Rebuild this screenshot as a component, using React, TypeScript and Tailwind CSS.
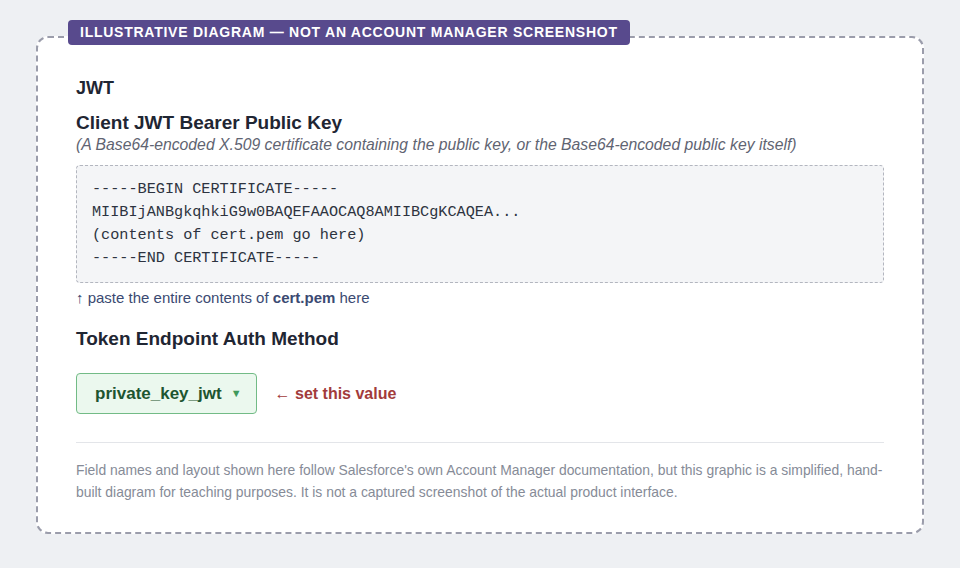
import React from "react";

const certLines = [
  "-----BEGIN CERTIFICATE-----",
  "MIIBIjANBgkqhkiG9w0BAQEFAAOCAQ8AMIIBCgKCAQEA...",
  "(contents of cert.pem go here)",
  "-----END CERTIFICATE-----",
];

export default function App() {
  return (
    <div
      className="min-h-[568px] w-full bg-[#eef0f3] px-9 pt-9 pb-9"
      style={{ fontFamily: '"Liberation Sans", Arial, sans-serif' }}
    >
      <div className="relative rounded-[12px] border-2 border-dashed border-[#9b9dab] bg-white px-[38px] pt-[39px] pb-[29px]">
        {/* Badge over the top border */}
        <div className="absolute left-[30px] top-[-18px] rounded-[4px] bg-[#584a8d] px-[12px] py-[4px] text-[14px] font-bold uppercase leading-[17px] tracking-[0.75px] text-white">
          Illustrative diagram — not an Account Manager screenshot
        </div>

        <h2 className="text-[18px] font-bold leading-[22px] text-[#1f2633]">JWT</h2>

        <h3 className="mt-[12px] text-[19px] font-bold leading-[24px] text-[#1f2633]">
          Client JWT Bearer Public Key
        </h3>
        <p className="text-[15.75px] italic leading-[20px] text-[#5f6472]">
          (A Base64-encoded X.509 certificate containing the public key, or the Base64-encoded public key itself)
        </p>

        <div
          className="mt-[10px] rounded-[4px] border border-dashed border-[#b3b6bf] bg-[#f4f5f7] px-[15px] py-[12px] text-[15.2px] leading-[23px] text-[#2d3340]"
          style={{ fontFamily: '"Liberation Mono", "Courier New", monospace' }}
        >
          {certLines.map((l) => (
            <div key={l}>{l}</div>
          ))}
        </div>

        <p className="mt-[5px] text-[15px] leading-[20px] text-[#3b4a72]">
          ↑ paste the entire contents of <span className="font-bold">cert.pem</span> here
        </p>

        <h3 className="mt-[19px] text-[19px] font-bold leading-[24px] text-[#1f2633]">
          Token Endpoint Auth Method
        </h3>

        <div className="mt-[22px] flex items-center gap-[18px]">
          <div className="flex h-[41px] items-center gap-[9px] rounded-[4px] border border-[#72bb86] bg-[#ebf8ee] pl-[18px] pr-[14px]">
            <span className="text-[17px] font-bold text-[#1d5530]">private_key_jwt</span>
            <span className="text-[11px] text-[#3f9a5c]">▼</span>
          </div>
          <span className="text-[16px] font-bold text-[#a23b3b]">
            <span className="font-normal">←</span> set this value
          </span>
        </div>

        <div className="mt-[28px] border-t border-[#e3e5e9]" />

        <p className="mt-[16px] text-[13.9px] leading-[22px] text-[#868b97]">
          Field names and layout shown here follow Salesforce's own Account Manager documentation, but this graphic is a
          simplified, hand-built diagram for teaching purposes. It is not a captured screenshot of the actual product
          interface.
        </p>
      </div>
    </div>
  );
}
